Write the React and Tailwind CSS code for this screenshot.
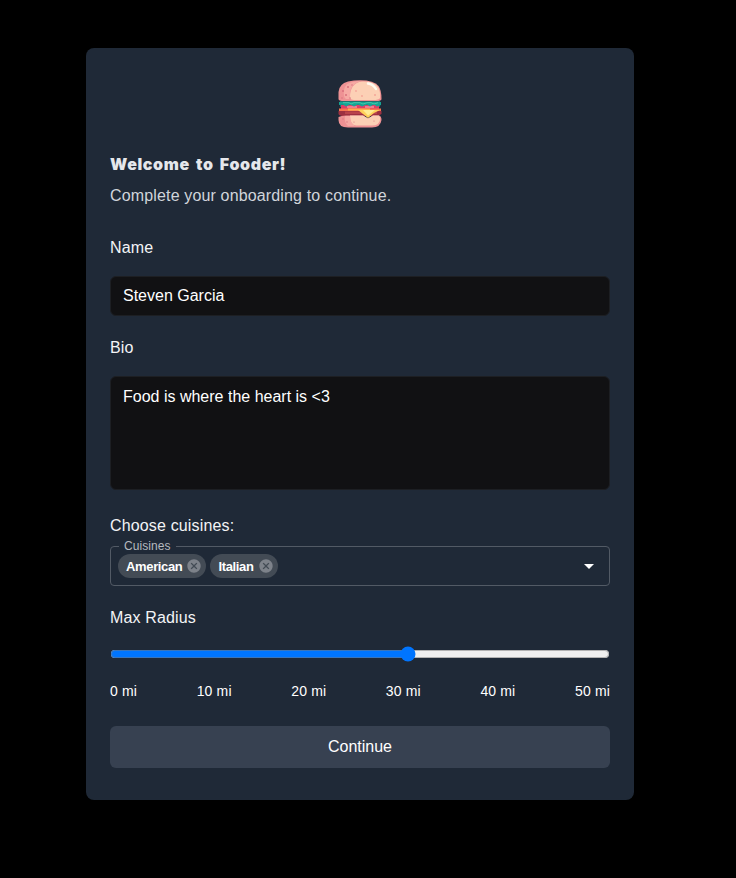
import React from "react";

function Burger() {
  return (
    <svg width="48" height="48" viewBox="0 0 48 48">
      <path d="M2.5 19V12Q3 4 12 1.5Q18 .3 24 .3Q38 .3 42.5 6Q45.5 10 45.5 19Q45.5 21 40 21H8Q2.5 21 2.5 19Z" fill="#ee9294" />
      <path d="M14 17Q14 3 26 1.5Q38 1 42 7Q44.5 11 44 18Q43 20 37 20H18Q14 20 14 17Z" fill="#fcd0b5" />
      <path d="M11 4Q17 1 25 1Q15 4 14 12V19H10Q7 17 8 10Q9 6 11 4Z" fill="#f6aaa4" />
      <path d="M32 3.5Q37 4 40 9" fill="none" stroke="#fffaf0" strokeWidth="2.4" strokeLinecap="round" />
      <g fill="#d96f7d">
        <circle cx="7" cy="11" r="1" /><circle cx="12" cy="7" r="1" />
        <circle cx="10" cy="15" r="1" /><circle cx="16" cy="5" r=".7" />
        <circle cx="6" cy="18" r=".7" /><circle cx="14" cy="18" r=".7" />
      </g>
      <g fill="#f5a698">
        <circle cx="20" cy="11" r=".9" /><circle cx="26" cy="16" r=".9" />
        <circle cx="39" cy="15" r="1" />
      </g>
      <path d="M4 21H44V27H4Z" fill="#1f7370" />
      <path d="M5 25H43V29H5Z" fill="#df3f66" />
      <path d="M11 26H21V28H11ZM29 26H38V28H29Z" fill="#f17c8e" />
      <path d="M3 22H45V25L41 26.5L38 24.5L34 26.5L31 24.5L26 26.5L22 24.5L18 26.5L14 24.5L10 26.5L7 24.5L3 25Z" fill="#16a394" />
      <path d="M7 22.7H13L15 24L18 22.7H24L27 24L31 22.7H35L38 24L42 22.7" fill="none" stroke="#42c9aa" />
      <path d="M3 28.5H45V31.5H3Z" fill="#f77651" />
      <path d="M12 28.5H34V30.5H12Z" fill="#ffae50" />
      <path d="M2.5 31H45.5V34Q43 36 40 36H8Q3 36 2.5 34Z" fill="#9d3041" />
      <path d="M9 31.5H41V34H9Z" fill="#b9434b" />
      <path d="M22 30H44L38 33L32 38L27 34Z" fill="#ffd15b" />
      <path d="M27 30H39L32 35.5Z" fill="#ffec94" />
      <path d="M2.5 37Q5 35.5 10 35.5H27L32 38.5L37 35.5H43Q45.5 36 45.5 40Q44.5 47.5 36 47.5H12Q2.5 47.5 2.5 40Z" fill="#ee9294" />
      <path d="M14 35.5H27L32 38.5L37 35.5H43Q44.5 37 44 40Q43 45.5 36 45.5H20Q14 45 14 35.5Z" fill="#fcd0b5" />
      <path d="M9 36H14Q14 43 19 46H12Q8 43 9 36Z" fill="#f6aaa4" />
      <g fill="#dc7580">
        <circle cx="7" cy="39" r=".7" /><circle cx="11" cy="42" r=".7" />
        <circle cx="18" cy="42" r=".6" /><circle cx="38" cy="41" r=".6" />
      </g>
    </svg>
  );
}

function Chip({ label }) {
  return (
    <span className="flex h-6 items-center rounded-full bg-[#434b55] pr-1 pl-2 text-[13px] text-white">
      <span className="pt-px font-bold tracking-[-0.35px]">{label}</span>
      <svg className="ml-1" width="16" height="16" viewBox="0 0 24 24" fill="#7d828a">
        <path d="M12 2C6.47 2 2 6.47 2 12s4.47 10 10 10 10-4.47 10-10S17.53 2 12 2zm5 13.59L15.59 17 12 13.41 8.41 17 7 15.59 10.59 12 7 8.41 8.41 7 12 10.59 15.59 7 17 8.41 13.41 12 17 15.59z" />
      </svg>
    </span>
  );
}

const marks = ["0 mi", "10 mi", "20 mi", "30 mi", "40 mi", "50 mi"];

export default function App() {
  return (
    <main className="h-[878px] bg-black pt-12 pl-[86px] font-['Liberation_Sans',Arial,sans-serif] text-base text-[#f3f4f6]">
      <section className="flex h-[752px] w-[548px] flex-col rounded-lg bg-[#1f2937] px-6 pt-8">
        <div className="flex h-12 justify-center"><Burger /></div>
        <h1 className="mt-6 h-6 font-['Inter',sans-serif] text-base leading-6 font-black tracking-[0.62px] text-[#e5e7eb] [word-spacing:2.5px]">Welcome to Fooder!</h1>
        <p className="mt-2 h-6 tracking-[0.15px] text-[#d1d5db]">Complete your onboarding to continue.</p>
        <label htmlFor="name" className="mt-7 h-6 tracking-[0.15px]">Name</label>
        <input id="name" defaultValue="Steven Garcia" className="mt-4 h-10 w-full rounded-md border border-[#1d1f23] bg-[#111113] px-3 text-white outline-none" />
        <label htmlFor="bio" className="mt-5 h-6 tracking-[0.15px]">Bio</label>
        <textarea id="bio" defaultValue="Food is where the heart is <3" className="mt-4 h-[114px] w-full shrink-0 resize-none rounded-md border border-[#1d1f23] bg-[#111113] px-3 py-2 text-white outline-none" />
        <p className="mt-6 h-6 tracking-[0.15px]">Choose cuisines:</p>
        <fieldset className="mt-[2px] h-[46px] shrink-0 rounded border border-[#525a65] pl-[7px]">
          <legend className="ml-[1px] h-3 px-[5px] text-xs leading-3 tracking-[0.06px] text-[#b5b9bf]">Cuisines</legend>
          <div className="mt-[2px] flex h-6 items-center gap-1 pr-2">
            <Chip label="American" />
            <Chip label="Italian" />
            <svg className="ml-auto" width="24" height="24" viewBox="0 0 24 24" fill="white"><path d="M7 10l5 5 5-5z" /></svg>
          </div>
        </fieldset>
        <label htmlFor="radius" className="mt-5 h-6 tracking-[0.15px]">Max Radius</label>
        <input id="radius" type="range" min="0" max="50" defaultValue="30" className="mt-4 h-4 w-full" />
        <div className="mt-[19px] flex h-5 justify-between text-sm tracking-[0.15px] text-white">
          {marks.map((mark) => <span key={mark}>{mark}</span>)}
        </div>
        <button className="mt-[25px] h-[42px] shrink-0 rounded-md bg-[#374151] pb-px text-white">Continue</button>
      </section>
    </main>
  );
}
